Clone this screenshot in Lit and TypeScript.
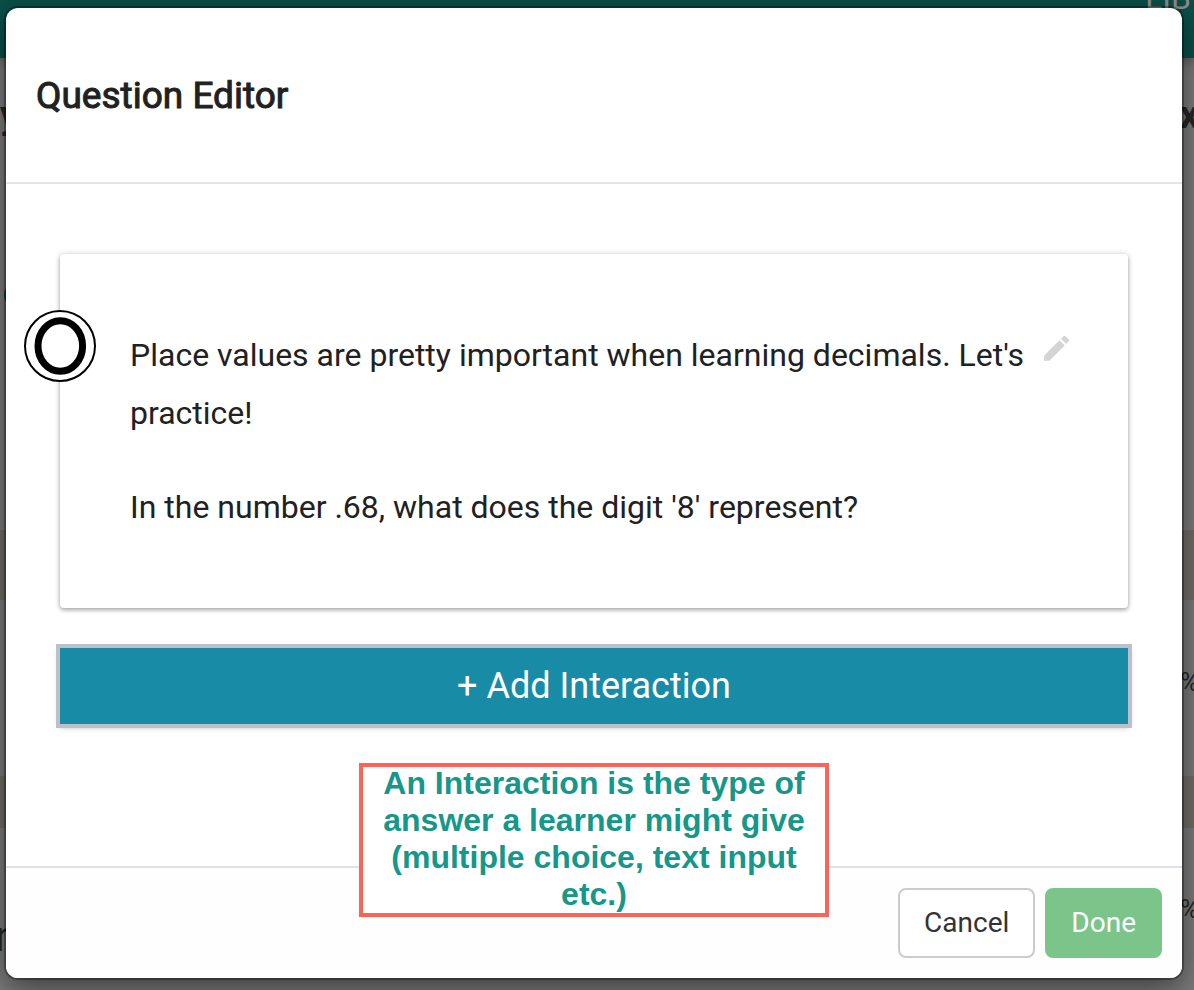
import { LitElement, html, css } from "lit";
import { customElement } from "lit/decorators.js";

@customElement("page-backdrop")
export class PageBackdrop extends LitElement {
  static styles = css`
    :host {
      display: flex;
      flex-direction: column;
      overflow: hidden;
      background: #7a7a7a;
      color: #262626;
    }
    .bar {
      display: flex;
      justify-content: flex-end;
      height: 58px;
      background: #0a4f48;
      color: #8c8c8c;
      font-size: 32px;
      line-height: 16px;
      box-shadow: 0 2px 12px rgba(0, 0, 0, 0.4);
    }
    .lib {
      margin-top: -10px;
      margin-right: 3px;
    }
    .row {
      display: flex;
      align-items: center;
      justify-content: space-between;
    }
    .heading {
      height: 114px;
      font-size: 38px;
      font-weight: 700;
    }
    .clip-end {
      margin-right: -5px;
    }
    .status {
      height: 230px;
      padding-top: 8px;
    }
    .dot {
      width: 28px;
      height: 28px;
      margin-left: 4px;
      border-radius: 50%;
      background: #0a4f48;
    }
    .space {
      height: 120px;
    }
    .stripe {
      height: 70px;
      background: #706d68;
    }
    .thin {
      height: 52px;
    }
    .cell {
      height: 164px;
      padding-bottom: 12px;
      font-size: 26px;
      justify-content: flex-end;
    }
    .last {
      height: 162px;
      font-size: 26px;
    }
    .big {
      font-size: 42px;
      margin-left: -5px;
      padding-top: 54px;
    }
  `;

  render() {
    return html`
      <div class="bar"><span class="lib">LIB</span></div>
      <div class="row heading">
        <span>y</span><span class="clip-end">x</span>
      </div>
      <div class="row status"><span class="dot"></span></div>
      <div class="space"></div>
      <div class="stripe"></div>
      <div class="row cell"><span class="clip-end">%</span></div>
      <div class="stripe thin"></div>
      <div class="row last">
        <span class="big">n</span><span class="clip-end">%</span>
      </div>
    `;
  }
}

@customElement("question-card")
export class QuestionCard extends LitElement {
  static styles = css`
    :host {
      display: block;
    }
    .card {
      position: relative;
      display: flex;
      align-items: flex-start;
      gap: 10px;
      padding: 72px 54px 72px 70px;
      border-radius: 4px;
      background: #fff;
      box-shadow:
        0 2px 4px rgba(0, 0, 0, 0.3),
        0 0 6px rgba(0, 0, 0, 0.14);
    }
    .marker {
      position: absolute;
      left: -36px;
      top: 56px;
    }
    .text {
      flex: 1;
      display: flex;
      flex-direction: column;
      gap: 36px;
      font-size: 32px;
      line-height: 58px;
      color: #212121;
    }
    p {
      margin: 0;
    }
    .edit {
      display: block;
      margin-top: 6px;
      padding: 0;
      border: 0;
      background: none;
      color: #d4d4d4;
      cursor: pointer;
    }
    svg {
      display: block;
    }
  `;

  render() {
    return html`
      <section class="card">
        <svg class="marker" width="72" height="72" viewBox="0 0 72 72" aria-hidden="true">
          <circle cx="36" cy="36" r="35" fill="#fff" stroke="#000" stroke-width="2" />
          <ellipse cx="36.3" cy="36" rx="22.3" ry="25.3" fill="#fff" stroke="#000" stroke-width="7" />
        </svg>
        <div class="text">
          <p>Place values are pretty important when learning decimals. Let's practice!</p>
          <p>In the number .68, what does the digit '8' represent?</p>
        </div>
        <button class="edit" type="button" aria-label="Edit">
          <svg width="34" height="34" viewBox="0 0.3 24.5 24.5" fill="currentColor">
            <path d="M3 17.25V21h3.75L17.81 9.94l-3.75-3.75L3 17.25zM20.71 7.04a1 1 0 0 0 0-1.41l-2.34-2.34a1 1 0 0 0-1.41 0l-1.83 1.83 3.75 3.75 1.83-1.83z" />
          </svg>
        </button>
      </section>
    `;
  }
}

@customElement("app-root")
export class AppRoot extends LitElement {
  static styles = css`
    :host {
      position: relative;
      display: flex;
      box-sizing: border-box;
      min-height: 100vh;
      padding: 8px 12px 12px 6px;
      overflow: hidden;
      font-family: Roboto, "Liberation Sans", sans-serif;
    }
    .behind {
      position: absolute;
      inset: 0;
    }
    .dialog {
      position: relative;
      flex: 1;
      display: flex;
      flex-direction: column;
      border-radius: 12px;
      background: #fff;
      box-shadow:
        0 0 0 2px rgba(0, 0, 0, 0.3),
        0 10px 30px rgba(0, 0, 0, 0.5);
    }
    .head {
      padding: 65px 30px 63px;
      border-bottom: 2px solid #e5e5e5;
    }
    h1 {
      margin: 0;
      font-size: 37px;
      font-weight: 400;
      line-height: 46px;
      color: #212121;
      -webkit-text-stroke: 1px #212121;
    }
    .body {
      flex: 1;
      display: flex;
      flex-direction: column;
      gap: 40px;
      padding: 70px 54px 142px;
    }
    .add {
      padding: 0;
      border: 0;
      outline: 4px solid #bcc1c7;
      background: #188ca6;
      box-shadow: 0 2px 6px rgba(0, 0, 0, 0.5);
      color: #fff;
      font-family: inherit;
      font-size: 36px;
      line-height: 76px;
    }
    .foot {
      position: relative;
      display: flex;
      justify-content: flex-end;
      gap: 10px;
      padding: 20px;
      border-top: 2px solid #dee2e6;
      border-radius: 0 0 12px 12px;
      background: #fefefe;
    }
    .btn {
      box-sizing: border-box;
      height: 70px;
      padding: 0 24px 2px;
      border: 2px solid #ccc;
      border-radius: 8px;
      background: #fff;
      color: #333;
      font-family: inherit;
      font-size: 28px;
    }
    .done {
      border-color: #7bc58b;
      background: #7bc58b;
      color: #fff;
    }
    .note {
      position: absolute;
      left: 50%;
      top: -105px;
      transform: translateX(-50%);
      box-sizing: border-box;
      display: flex;
      align-items: flex-end;
      width: 470px;
      height: 154px;
      padding: 0 16px;
      border: 4px solid #ff6358;
      background: #fff;
      color: #16978a;
      font-family: "Liberation Sans", Arial, sans-serif;
      font-size: 32px;
      font-weight: 700;
      line-height: 37px;
      text-align: center;
    }
  `;

  render() {
    return html`
      <page-backdrop class="behind" aria-hidden="true"></page-backdrop>
      <div class="dialog" role="dialog" aria-labelledby="title">
        <header class="head"><h1 id="title">Question Editor</h1></header>
        <main class="body">
          <question-card></question-card>
          <button class="add" type="button">+ Add Interaction</button>
        </main>
        <footer class="foot">
          <button class="btn" type="button">Cancel</button>
          <button class="btn done" type="button">Done</button>
          <div class="note">
            An Interaction is the type of answer a learner might give (multiple choice, text input etc.)
          </div>
        </footer>
      </div>
    `;
  }
}
